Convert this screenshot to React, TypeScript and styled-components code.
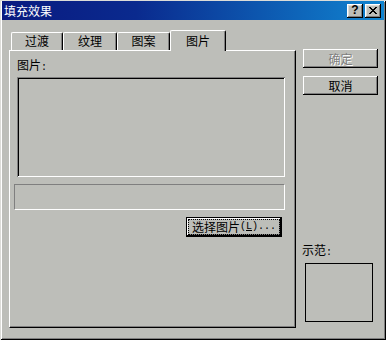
import React from 'react';
import styled, { createGlobalStyle } from 'styled-components';

const GlobalStyle = createGlobalStyle`
  html, body {
    margin: 0;
    padding: 0;
    background: #bdbeb9;
  }
  body {
    font-family: "Noto Sans CJK SC", "Liberation Sans", sans-serif;
    font-size: 12px;
    color: #000;
  }
`;

const Window = styled.div`
  width: 386px;
  height: 340px;
  box-sizing: border-box;
  padding: 1px 2px 2px 2px;
  background: #bdbeb9;
  box-shadow: inset 1px 1px #dcdcd8, inset -1px -1px #000, inset 2px 2px #fff, inset -2px -2px #7f7f7f;
  display: flex;
  flex-direction: column;
`;

const TitleBar = styled.div`
  height: 19px;
  display: flex;
  align-items: center;
  justify-content: space-between;
  padding: 0 3px 0 2px;
  background: linear-gradient(90deg, #0a1a80 0%, #0a2a8e 35%, #1084d0 100%);
  color: #fff;
`;

const TitleText = styled.span`
  font-size: 12px;
  line-height: 19px;
`;

const TitleButtons = styled.div`
  display: flex;
  gap: 2px;
`;

const TitleButton = styled.div`
  width: 16px;
  height: 14px;
  box-sizing: border-box;
  background: #bdbeb9;
  box-shadow: inset -1px -1px #000, inset 1px 1px #fff, inset -2px -2px #7f7f7f, inset 2px 2px #dcdcd8;
  display: flex;
  align-items: center;
  justify-content: center;
  color: #000;
  font-family: "Liberation Sans", Arial, sans-serif;
  font-weight: bold;
  font-size: 12px;
  line-height: 14px;
  padding-bottom: 1px;
`;

const Body = styled.div`
  flex: 1;
  display: flex;
  padding: 10px 0 10px 7px;
`;

const LeftColumn = styled.div`
  width: 287px;
  display: flex;
  flex-direction: column;
`;

const TabRow = styled.div`
  height: 20px;
  display: flex;
  align-items: flex-end;
  padding-left: 2px;
  position: relative;
  z-index: 1;
`;

const Tab = styled.div<{ $width: number; $active?: boolean }>`
  width: ${p => p.$width}px;
  height: ${p => (p.$active ? 21 : 18)}px;
  margin-bottom: ${p => (p.$active ? -1 : 0)}px;
  box-sizing: border-box;
  background: #bdbeb9;
  border-top: 1px solid #fff;
  border-left: 1px solid #fff;
  border-right: 1px solid #000;
  border-radius: 2px 2px 0 0;
  box-shadow: inset -1px 0 #7f7f7f;
  display: flex;
  justify-content: center;
  padding-top: ${p => (p.$active ? 3 : 1)}px;
  line-height: 14px;
  font-size: 12px;
`;

const Panel = styled.div`
  flex: 1;
  box-sizing: border-box;
  border-top: 1px solid #fff;
  border-left: 1px solid #fff;
  border-right: 1px solid #000;
  border-bottom: 1px solid #000;
  box-shadow: inset -1px -1px #7f7f7f;
  display: flex;
  flex-direction: column;
  padding: 7px 10px 0 4px;
`;

const Label = styled.div<{ $indent?: number }>`
  line-height: 14px;
  height: 14px;
  margin-left: ${p => p.$indent || 0}px;
`;

const HalfWidth = styled.span`
  font-family: "Liberation Mono", "Courier New", monospace;
  font-size: 10px;
`;

const PictureBox = styled.div`
  height: 100px;
  margin: 5px 0 0 3px;
  box-shadow: inset 1px 1px #7f7f7f, inset -1px -1px #fff, inset 2px 2px #000, inset -2px -2px #bdbeb9;
`;

const EditBox = styled.div`
  height: 26px;
  box-sizing: border-box;
  margin-top: 7px;
  border-top: 1px solid #7f7f7f;
  border-left: 1px solid #7f7f7f;
  border-right: 1px solid #fff;
  border-bottom: 1px solid #fff;
`;

const Button = styled.div<{ $width: number; $disabled?: boolean; $default?: boolean }>`
  width: ${p => p.$width}px;
  height: ${p => (p.$default ? 20 : 19)}px;
  box-sizing: border-box;
  display: flex;
  align-items: center;
  justify-content: center;
  background: #bdbeb9;
  font-size: 12px;
  line-height: 14px;
  color: ${p => (p.$disabled ? '#7f7f7f' : '#000')};
  text-shadow: ${p => (p.$disabled ? '1px 1px #fff' : 'none')};
  box-shadow: ${p =>
    p.$default
      ? 'inset 0 0 0 1px #000, inset -2px -2px #000, inset 2px 2px #fff, inset -3px -3px #7f7f7f'
      : 'inset -1px -1px #000, inset 1px 1px #fff, inset -2px -2px #7f7f7f'};
`;

const FocusRing = styled.span`
  display: flex;
  align-items: center;
  justify-content: center;
  width: 90px;
  height: 14px;
  box-sizing: border-box;
  outline: 1px dotted #000;
  padding-bottom: 1px;
`;

const Underline = styled.span`
  text-decoration: underline;
`;

const BrowseButton = styled(Button)`
  align-self: flex-end;
  margin: 7px 3px 0 0;
`;

const RightColumn = styled.div`
  width: 75px;
  margin-left: 7px;
  display: flex;
  flex-direction: column;
`;

const ActionButton = styled(Button)`
  margin-top: 19px;
  & + & {
    margin-top: 8px;
  }
`;

const SampleLabel = styled(Label)`
  margin-top: auto;
  margin-left: -1px;
`;

const SampleBox = styled.div`
  width: 68px;
  height: 59px;
  box-sizing: border-box;
  margin: 6px 0 6px 2px;
  border: 1px solid #000;
`;

const CloseIcon = () => (
  <svg width="8" height="7" viewBox="0 0 8 7" shapeRendering="crispEdges">
    <path d="M0 0h2v1h-2zM6 0h2v1h-2zM1 1h2v1h-2zM5 1h2v1h-2zM2 2h4v1h-4zM3 3h2v1h-2zM2 4h4v1h-4zM1 5h2v1h-2zM5 5h2v1h-2zM0 6h2v1h-2zM6 6h2v1h-2z" fill="#000" />
  </svg>
);

export default function App() {
  return (
    <>
      <GlobalStyle />
      <Window>
        <TitleBar>
          <TitleText>填充效果</TitleText>
          <TitleButtons>
            <TitleButton>?</TitleButton>
            <TitleButton>
              <CloseIcon />
            </TitleButton>
          </TitleButtons>
        </TitleBar>
        <Body>
          <LeftColumn>
            <TabRow>
              <Tab $width={52}>过渡</Tab>
              <Tab $width={54}>纹理</Tab>
              <Tab $width={53}>图案</Tab>
              <Tab $width={56} $active>图片</Tab>
            </TabRow>
            <Panel>
              <Label $indent={3}>图片<HalfWidth>:</HalfWidth></Label>
              <PictureBox />
              <EditBox />
              <BrowseButton $width={96} $default>
                <FocusRing>
                  选择图片<HalfWidth>(<Underline>L</Underline>)...</HalfWidth>
                </FocusRing>
              </BrowseButton>
            </Panel>
          </LeftColumn>
          <RightColumn>
            <ActionButton $width={75} $disabled>确定</ActionButton>
            <ActionButton $width={75}>取消</ActionButton>
            <SampleLabel>示范<HalfWidth>:</HalfWidth></SampleLabel>
            <SampleBox />
          </RightColumn>
        </Body>
      </Window>
    </>
  );
}
